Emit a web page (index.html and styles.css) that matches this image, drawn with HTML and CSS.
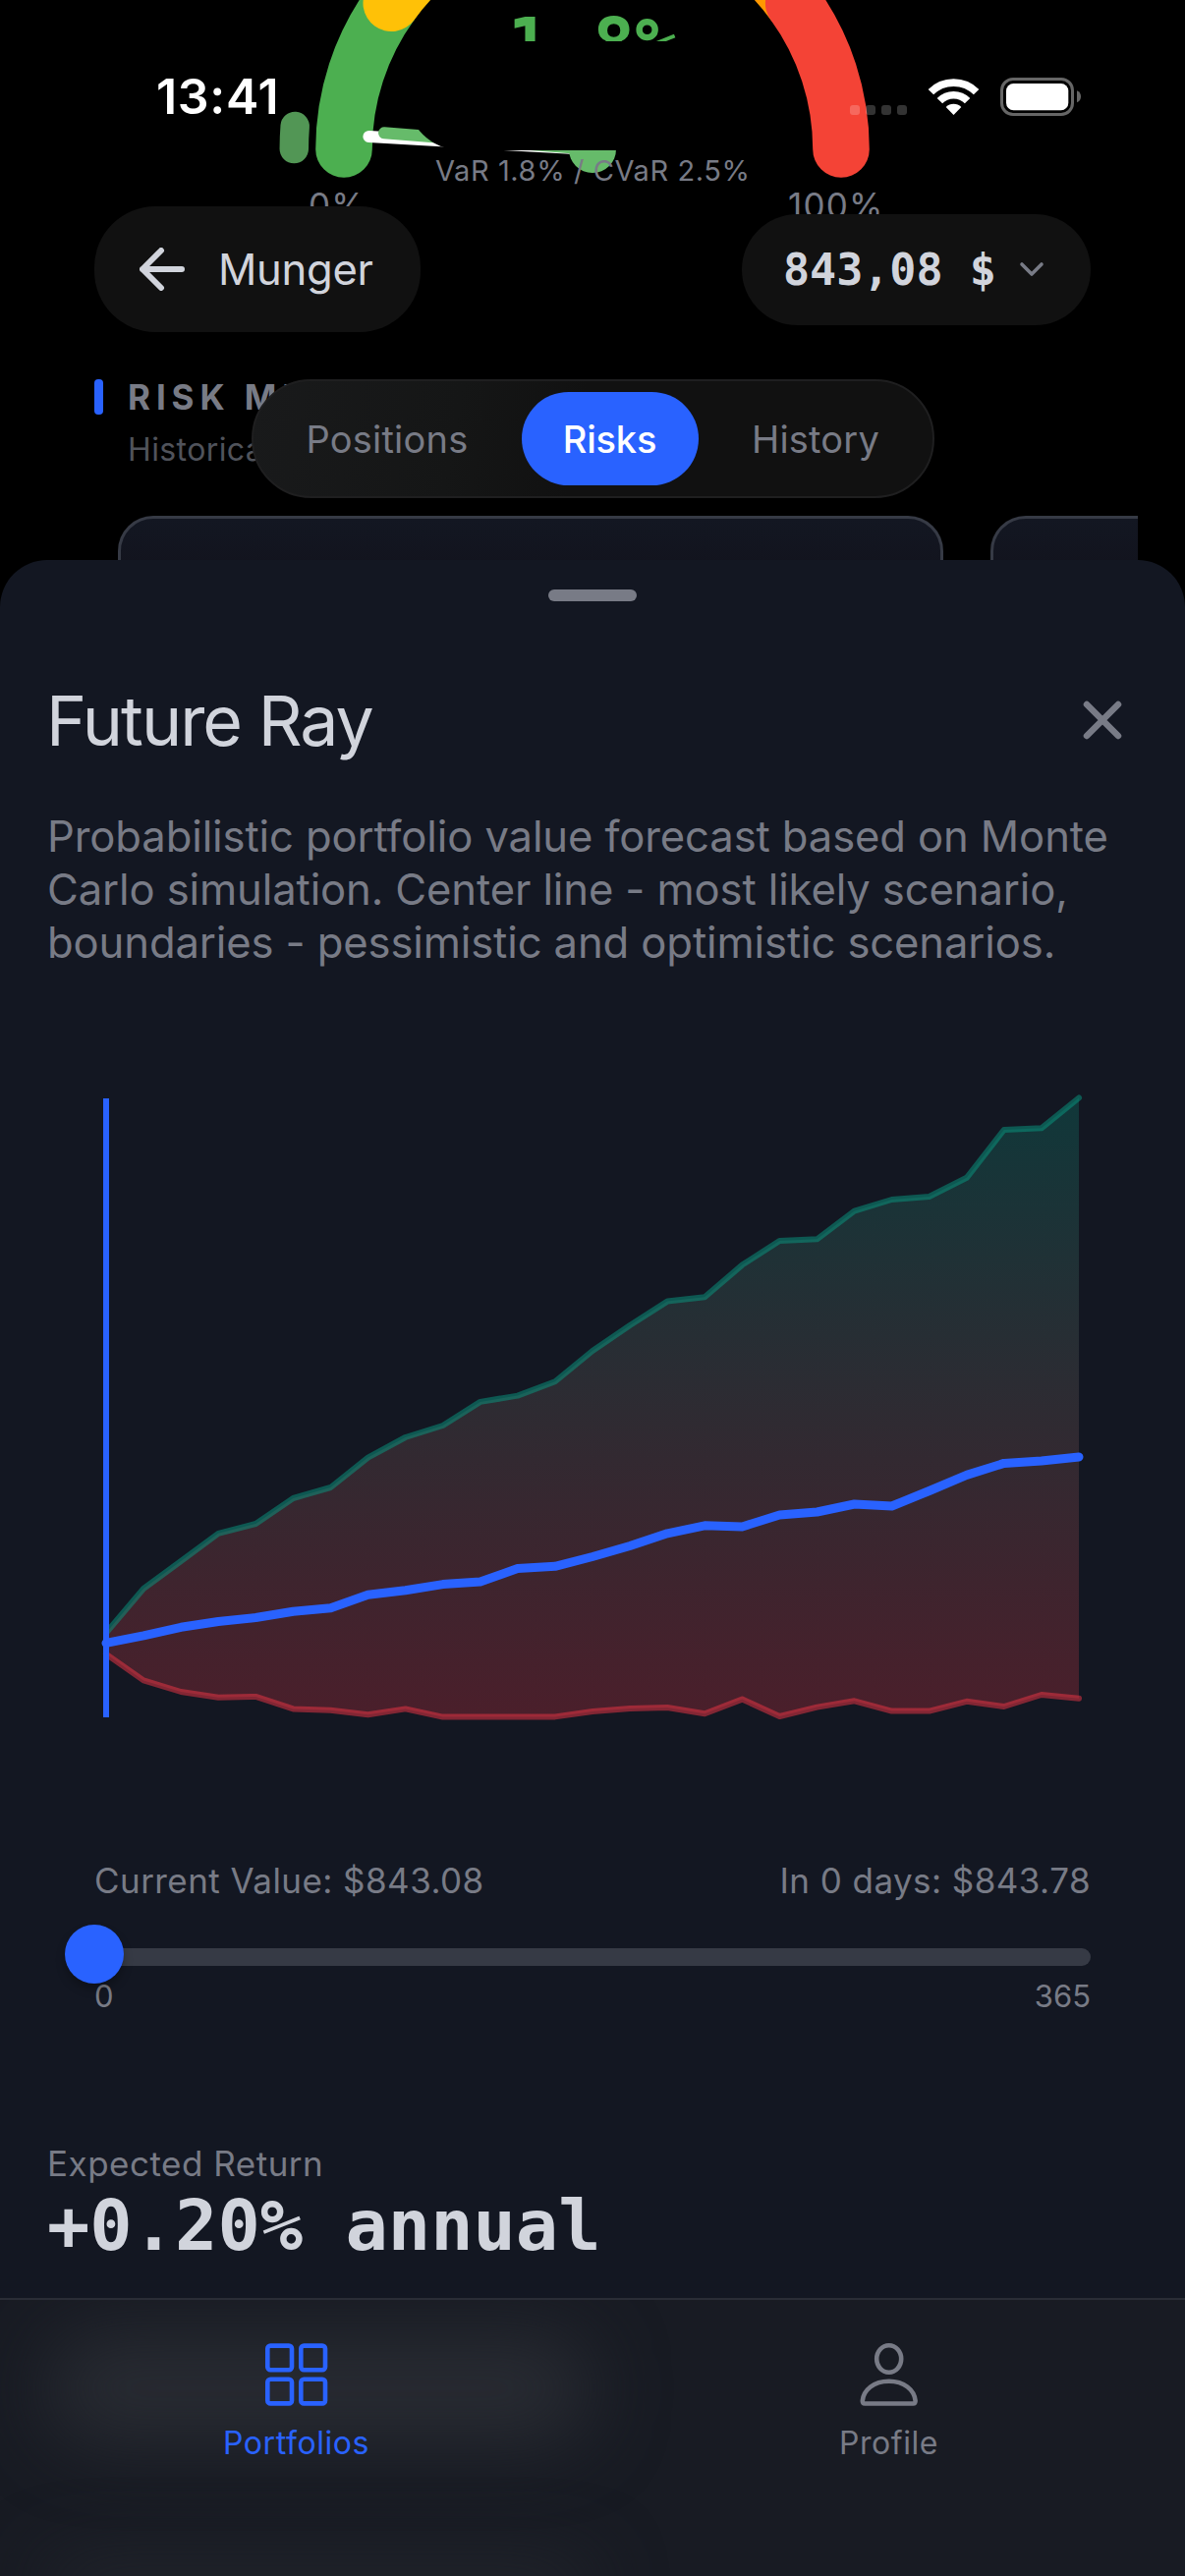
FILE: index.html
```html
<!DOCTYPE html>
<html lang="en">
<head>
<meta charset="utf-8">
<title>Munger – Risks</title>
<link rel="stylesheet" href="styles.css">
</head>
<body>
<div class="screen">
  <main class="page">
    <svg class="gauge" viewBox="0 0 1206 383" width="1206" height="383" fill="none" aria-hidden="true">
      <g stroke-width="57.6" stroke-linecap="round">
        <path stroke="#4caf50" d="M350 152A253 253 0 0 1 398.300 3.300"/>
        <path stroke="#ffc107" d="M398.300 3.300A253 253 0 0 1 603 -101"/>
        <path stroke="#ff9800" d="M603 -101A253 253 0 0 1 807.700 3.300"/>
        <path stroke="#f44336" d="M807.700 3.300A253 253 0 0 1 856 152"/>
      </g>
      <path stroke="#529655" stroke-width="29.500" stroke-linecap="round" d="M299.300 151.500A303.700 303.700 0 0 1 300.200 128.500"/>
      <path stroke="#fff" stroke-width="12" stroke-linecap="round" d="M603 152L375.400 139.100"/>
      <path stroke="#66bb6a" stroke-width="12" stroke-linecap="round" d="M603 152L391 135.300"/>
      <circle cx="603" cy="152" r="24" fill="#66bb6a"/>
      <text class="gauge-value" x="603" y="69" text-anchor="middle">1.8%</text>
      <text class="gauge-note" x="443" y="184">VaR 1.8% / CVaR 2.5%</text>
      <text class="gauge-mark" x="314" y="222">0%</text>
      <text class="gauge-mark" x="802" y="222">100%</text>
    </svg>
    <section class="risk">
      <h2 class="risk-title">RISK METRICS</h2>
      <p class="risk-note">Historical</p>
      <div class="cards">
        <div class="card"></div>
        <div class="card"></div>
      </div>
    </section>
  </main>

  <div class="island"></div>

  <div class="status">
    <span class="clock">13:41</span>
    <svg viewBox="865 78 235 39" width="235" height="39" aria-hidden="true">
      <g fill="#fff" fill-opacity=".2">
        <rect x="865" y="106" width="10" height="10" rx="3"/>
        <rect x="881" y="106" width="10" height="10" rx="3"/>
        <rect x="897" y="106" width="10" height="10" rx="3"/>
        <rect x="913" y="106" width="10" height="10" rx="3"/>
      </g>
      <g fill="none" stroke="#fff" stroke-width="7.700">
        <path d="M947.400 92.600A32.700 32.700 0 0 1 993.600 92.600"/>
        <path d="M956.400 101.600A19.900 19.900 0 0 1 984.600 101.600"/>
      </g>
      <path fill="#fff" d="M970.500 115.900L962.700 108.100A11 11 0 0 1 978.300 108.100Z"/>
      <rect x="1019.500" y="79.500" width="72" height="36" rx="11.500" fill="none" stroke="#fff" stroke-opacity=".4" stroke-width="3"/>
      <rect x="1024" y="84" width="63.300" height="27.200" rx="7.500" fill="#fff"/>
      <path fill="#fff" fill-opacity=".4" d="M1096 91.300Q1100 93 1100 97.300T1096 103.300Z"/>
    </svg>
  </div>

  <header class="header">
    <button class="pill back">
      <svg viewBox="0 0 46 44" width="46" height="44" fill="none" stroke="#d1d4dc" stroke-width="6" stroke-linecap="round" stroke-linejoin="round"><path d="M43 22H3M22 3L3 22L22 41"/></svg>
      <span>Munger</span>
    </button>
    <button class="pill balance">
      <span>843,08 $</span>
      <svg viewBox="0 0 28 18" width="28" height="18" fill="none" stroke="#787b86" stroke-width="3.600" stroke-linecap="round" stroke-linejoin="round"><path d="M4 4L14 14L24 4"/></svg>
    </button>
  </header>

  <nav class="tabs">
    <a class="tab">Positions</a>
    <a class="tab tab-active">Risks</a>
    <a class="tab">History</a>
  </nav>

  <section class="sheet">
    <div class="handle"></div>
    <div class="sheet-head">
      <h1>Future Ray</h1>
      <svg class="close" viewBox="0 0 40 40" width="40" height="40" fill="none" stroke="#787b86" stroke-width="6.500" stroke-linecap="round"><path d="M4 4L36 36M36 4L4 36"/></svg>
    </div>
    <p class="lead">Probabilistic portfolio value forecast based on Monte<br>Carlo simulation. Center line - most likely scenario,<br>boundaries - pessimistic and optimistic scenarios.</p>

    <svg class="chart" viewBox="96 1109 1014 648" width="1014" height="648" fill="none" stroke-linejoin="round" stroke-linecap="round">
      <defs>
        <linearGradient id="cone" gradientUnits="userSpaceOnUse" x1="0" y1="1117" x2="0" y2="1748">
          <stop offset="0" stop-color="#089981" stop-opacity=".25"/>
          <stop offset="1" stop-color="#f23645" stop-opacity=".25"/>
        </linearGradient>
      </defs>
      <path fill="url(#cone)" d="M108 1662L146.100 1617L184.200 1589L222.200 1560.800L260.300 1551L298.400 1525L336.500 1514L374.500 1483.600L412.600 1463L450.700 1451L488.800 1426.900L526.800 1420.600L564.900 1406.300L603 1375L641.100 1349L679.200 1324.600L717.200 1320.200L755.300 1287.600L793.400 1263L831.500 1261.300L869.500 1232.700L907.600 1221L945.700 1218L983.800 1198.800L1021.800 1150L1059.900 1148.300L1098 1117.500L1098 1728.700L1059.900 1725L1021.800 1737L983.800 1731.800L945.700 1741.600L907.600 1741.600L869.500 1731.300L831.500 1737.600L793.400 1747L755.300 1729.600L717.200 1744.300L679.200 1738L641.100 1739L603 1742L564.900 1747.400L450.700 1747.600L412.600 1739.400L374.500 1745.200L336.500 1740.700L298.400 1739.400L260.300 1726.900L222.200 1727.800L184.200 1722L146.100 1710.400L108 1683.600Z"/>
      <polyline stroke="#089981" stroke-opacity=".5" stroke-width="6" points="108,1662 146.100,1617 184.200,1589 222.200,1560.800 260.300,1551 298.400,1525 336.500,1514 374.500,1483.600 412.600,1463 450.700,1451 488.800,1426.900 526.800,1420.600 564.900,1406.300 603,1375 641.100,1349 679.200,1324.600 717.200,1320.200 755.300,1287.600 793.400,1263 831.500,1261.300 869.500,1232.700 907.600,1221 945.700,1218 983.800,1198.800 1021.800,1150 1059.900,1148.300 1098,1117.500"/>
      <polyline stroke="#f23645" stroke-opacity=".5" stroke-width="6" points="108,1683.600 146.100,1710.400 184.200,1722 222.200,1727.800 260.300,1726.900 298.400,1739.400 336.500,1740.700 374.500,1745.200 412.600,1739.400 450.700,1747.600 564.900,1747.400 603,1742 641.100,1739 679.200,1738 717.200,1744.300 755.300,1729.600 793.400,1747 831.500,1737.600 869.500,1731.300 907.600,1741.600 945.700,1741.600 983.800,1731.800 1021.800,1737 1059.900,1725 1098,1728.700"/>
      <polyline stroke="#2962ff" stroke-width="9" points="108,1672.400 146.100,1664.800 184.200,1656.300 222.200,1650.500 260.300,1646.500 298.400,1640.300 336.500,1636.700 374.500,1623.300 412.600,1618.800 450.700,1612.600 488.800,1610 526.800,1596.500 564.900,1594.300 603,1584.500 641.100,1573.500 679.200,1560.800 717.200,1552.800 755.300,1554 793.400,1542 831.500,1539 869.500,1531 907.600,1533 945.700,1517.500 983.800,1501.400 1021.800,1489.400 1059.900,1487 1098,1483"/>
      <path stroke="#2962ff" stroke-width="6" stroke-linecap="butt" d="M108 1118V1748"/>
    </svg>

    <div class="forecast">
      <div class="row values"><span>Current Value: $843.08</span><span>In 0 days: $843.78</span></div>
      <div class="track"><div class="thumb"></div></div>
      <div class="row range"><span>0</span><span>365</span></div>
    </div>

    <div class="stat">
      <div class="stat-label">Expected Return</div>
      <div class="stat-value">+0.20% annual</div>
    </div>
  </section>

  <nav class="bottom">
    <a class="dest dest-active">
      <svg viewBox="0 0 64 64" width="64" height="64" fill="none" stroke="currentColor" stroke-width="4.600"><rect x="2.300" y="2.600" width="24.700" height="24.700" rx="3"/><rect x="36.300" y="2.600" width="24.700" height="24.700" rx="3"/><rect x="2.300" y="36.700" width="24.700" height="24.700" rx="3"/><rect x="36.300" y="36.700" width="24.700" height="24.700" rx="3"/></svg>
      <span>Portfolios</span>
    </a>
    <a class="dest">
      <svg viewBox="0.8 0 64 64" width="64" height="64" fill="none" stroke="currentColor" stroke-width="4.600" stroke-linejoin="round"><ellipse cx="32.500" cy="16" rx="12.500" ry="13.700"/><path d="M8 61.500Q5.300 61.500 5.600 58.500C6.800 47.500 17 38.800 32.500 38.800S58.200 47.500 59.400 58.500Q59.700 61.500 57 61.500Z"/></svg>
      <span>Profile</span>
    </a>
  </nav>
</div>
</body>
</html>
```
FILE: styles.css
```css
* { box-sizing: border-box; }

body {
  margin: 0;
  background: #000;
  color: #787b86;
  font-family: Inter, "Liberation Sans", sans-serif;
}

h1, h2, p { margin: 0; font-weight: 400; }

svg { display: block; flex: none; }

.screen {
  position: relative;
  width: 1206px;
  height: 2622px;
  overflow: hidden;
  background: #000;
}

/* scrolled page under the floating chrome */
.page { display: flex; flex-direction: column; }

.gauge-value {
  font: 700 72px "DejaVu Sans Mono", monospace;
  fill: #4caf50;
}
.gauge-note { font-size: 29px; letter-spacing: .58px; fill: #787b86; }
.gauge-mark { font-size: 35px; letter-spacing: 1.200px; fill: #787b86; }

.risk { padding: 0 48px 0 96px; }

.risk-title {
  display: flex;
  align-items: center;
  gap: 25px;
  font-size: 35px;
  font-weight: 700;
  line-height: 42px;
  letter-spacing: 5.900px;
}
.risk-title::before {
  content: "";
  width: 9px;
  height: 36px;
  border-radius: 4px;
  background: #2962ff;
}

.risk-note {
  margin: 14px 0 0 34px;
  font-size: 32px;
  line-height: 38px;
  letter-spacing: .4px;
  color: #50535b;
}

.cards {
  display: flex;
  gap: 48px;
  margin-top: 48px;
  padding-left: 24px;
  overflow: hidden;
}
.card {
  flex: none;
  width: 840px;
  height: 300px;
  border: 3px solid #363a45;
  border-radius: 36px;
  background: linear-gradient(#131722, #12121c 70px);
}

.island {
  position: absolute;
  top: 42px;
  left: 414px;
  width: 378px;
  height: 111px;
  border-radius: 56px;
  background: #000;
}

.status {
  position: absolute;
  top: 68px;
  left: 0;
  right: 0;
  height: 60px;
  padding: 0 106px 0 159px;
  display: flex;
  justify-content: space-between;
  align-items: center;
}
.clock {
  color: #fff;
  font-size: 50px;
  font-weight: 600;
  line-height: 60px;
  letter-spacing: .7px;
}

.header {
  position: absolute;
  top: 210px;
  left: 96px;
  right: 96px;
  display: flex;
  justify-content: space-between;
  align-items: center;
}
.pill {
  display: flex;
  align-items: center;
  border: 0;
  background: #111;
  color: #d1d4dc;
}
.back {
  width: 332px;
  height: 128px;
  padding: 0 0 0 46px;
  gap: 34px;
  border-radius: 62px;
  font: 400 43.600px Inter, sans-serif;
  letter-spacing: -.3px;
}
.balance {
  width: 355px;
  height: 113px;
  padding: 0 0 0 42px;
  gap: 22px;
  border-radius: 57px;
  font: 700 45px "DejaVu Sans Mono", monospace;
}

.tabs {
  position: absolute;
  top: 386px;
  left: 256px;
  width: 695px;
  height: 121px;
  display: grid;
  grid-template-columns: 251px 180px 217px;
  gap: 11px;
  align-items: center;
  justify-content: center;
  border: 2px solid #1f1f20;
  border-radius: 61px;
  background: linear-gradient(100deg, #191a1b, #151616 30%, #111 48%);
}
.tab {
  height: 95px;
  border-radius: 48px;
  font-size: 38px;
  line-height: 96px;
  letter-spacing: .2px;
  text-align: center;
}
.tab-active {
  background: #2962ff;
  color: #fff;
  font-weight: 500;
  letter-spacing: -.2px;
}

.sheet {
  position: absolute;
  top: 570px;
  left: 0;
  right: 0;
  bottom: 0;
  display: flex;
  flex-direction: column;
  padding: 30px 48px 0;
  border-radius: 48px 48px 0 0;
  background: #131722;
}
.handle {
  align-self: center;
  width: 90px;
  height: 12px;
  border-radius: 6px;
  background: #787b86;
}
.sheet-head {
  display: flex;
  justify-content: space-between;
  align-items: center;
  margin: 78px 16px 0 -1px;
}
.sheet-head h1 {
  color: #d1d4dc;
  font-size: 69.800px;
  line-height: 88px;
  letter-spacing: -2px;
}
.close { margin-bottom: 2px; }

.lead {
  margin-top: 47px;
  font-size: 43.600px;
  line-height: 54px;
  letter-spacing: -.12px;
  white-space: nowrap;
}

.chart { margin: 122px 48px 0; }

.forecast { margin: 136px 48px 0; }
.row { display: flex; justify-content: space-between; }
.values {
  font-size: 35px;
  line-height: 42px;
  letter-spacing: .44px;
}
.track {
  position: relative;
  height: 18px;
  margin-top: 48px;
  border-radius: 9px;
  background: #363a45;
}
.thumb {
  position: absolute;
  top: -24px;
  left: -30px;
  width: 60px;
  height: 60px;
  border-radius: 50%;
  background: #2962ff;
  box-shadow: 0 6px 10px rgba(0, 0, 0, .25);
}
.range {
  margin-top: 12px;
  font-size: 31px;
  line-height: 38px;
}

.stat { margin-top: 130px; }
.stat-label {
  font-size: 35px;
  line-height: 42px;
  letter-spacing: .5px;
}
.stat-value {
  color: #d1d4dc;
  font: 700 72px/84px "DejaVu Sans Mono", monospace;
}

.bottom {
  position: absolute;
  left: 0;
  right: 0;
  bottom: 0;
  height: 283px;
  display: grid;
  grid-template-columns: 1fr 1fr;
  padding-top: 44px;
  border-top: 2px solid #2a2d36;
  background: #181b23;
  overflow: hidden;
}
/* soft glow of the text scrolled beneath the bar */
.bottom::before,
.bottom::after {
  content: "";
  position: absolute;
  top: 35px;
  left: 50px;
  width: 550px;
  height: 110px;
  border-radius: 50px;
  background: #282b32;
  filter: blur(38px);
}
.bottom::after { top: 270px; height: 50px; background: #24272e; }

.dest {
  position: relative;
  z-index: 1;
  display: flex;
  flex-direction: column;
  align-items: center;
  gap: 19px;
  font-size: 32px;
  line-height: 38px;
  letter-spacing: .58px;
}
.dest-active { color: #2962ff; }
```
